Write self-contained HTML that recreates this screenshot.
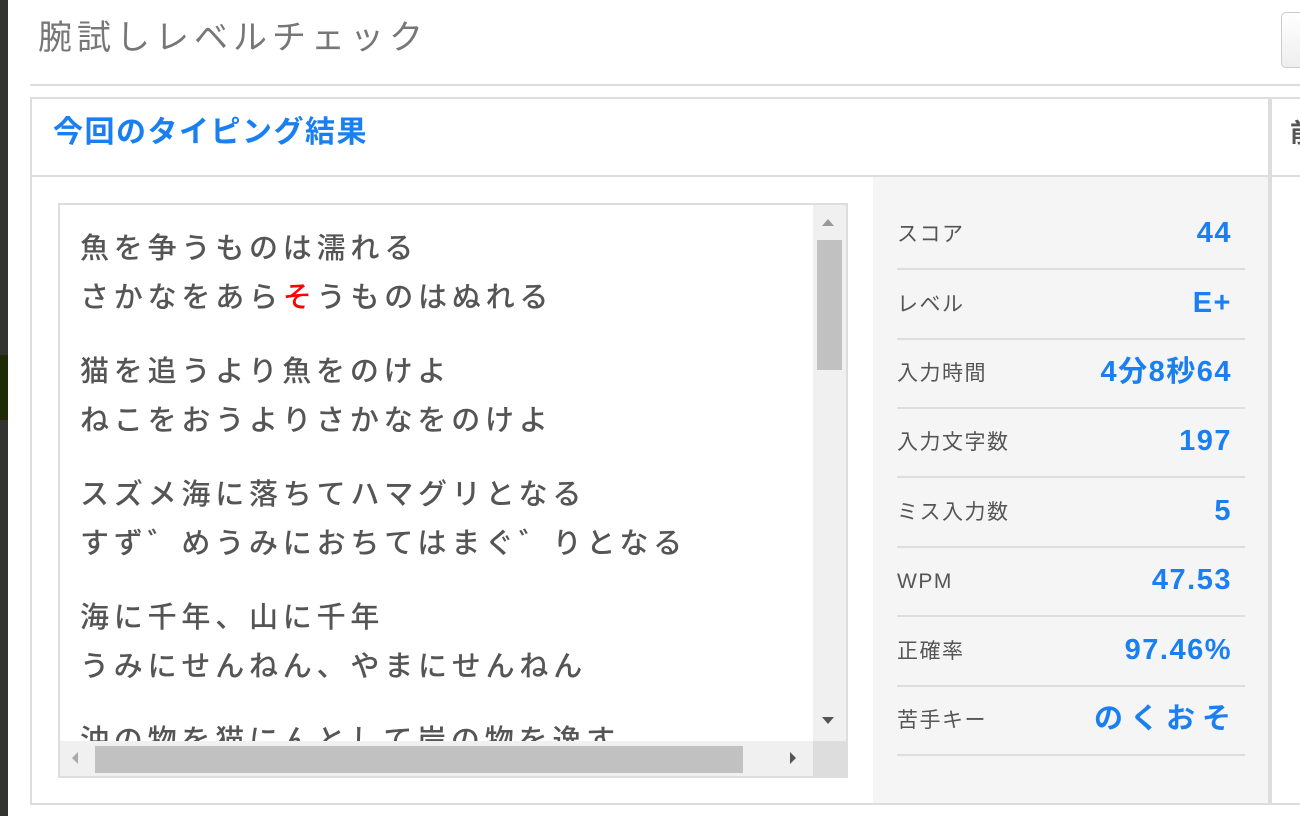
<!DOCTYPE html>
<html><head><meta charset="utf-8"><style>
*{margin:0;padding:0;box-sizing:border-box}
body{width:1300px;height:816px;overflow:hidden;background:#fff;font-family:"Liberation Sans","Noto Sans CJK JP",sans-serif;position:relative}
.abs{position:absolute}
.strip{left:0;top:0;width:8px;height:816px;background:#333331}
h1{position:absolute;left:38px;top:16px;font-size:34px;font-weight:normal;color:#777;letter-spacing:5px;line-height:44px;white-space:nowrap}
.hr{left:30px;top:84px;width:1270px;height:2px;background:#ddd}
.btn{left:1281px;top:12px;width:40px;height:56px;border:1px solid #ccc;border-radius:5px;background:linear-gradient(#fff,#eee)}
.panel{left:30px;top:97px;width:1240px;height:708px;border:2px solid #ddd}
.phead{left:30px;top:97px;width:1240px;height:80px;border-bottom:2px solid #ddd}
.title{left:53px;top:114px;font-size:30px;font-weight:bold;color:#1a7ff0;letter-spacing:1.5px;line-height:38px;white-space:nowrap}
.stats{left:873px;top:177px;width:395px;height:626px;background:#f5f5f5}
.ta{left:58px;top:203px;width:790px;height:575px;border:2px solid #ddd;background:#fff;overflow:hidden}
.txt{position:absolute;left:20px;top:20px;font-size:29px;color:#555;letter-spacing:4.8px;line-height:49px;white-space:nowrap;font-weight:500}
.txt p{margin-bottom:25px}
.vs{right:0;top:0;width:33px;height:538px;background:#f0f0f0}
.hs{left:0;bottom:0;width:786px;height:35px;background:#f0f0f0}
.row{left:897px;width:348px;height:70px;border-bottom:2px solid #ddd}
.lab{position:absolute;left:0;top:22px;font-size:21px;color:#555;line-height:26px;white-space:nowrap;letter-spacing:1.5px}
.val{position:absolute;right:13px;top:16px;font-size:29px;font-weight:bold;color:#1a7ff0;line-height:34px;white-space:nowrap;letter-spacing:1.5px}
.rp{left:1270px;top:97px;width:30px;height:708px;border-top:2px solid #ddd;border-bottom:2px solid #ddd;border-left:2px solid #ddd}
</style></head><body>
<div class="abs strip"></div>
<div class="abs" style="left:0;top:355px;width:8px;height:65px;background:#1f2a06"></div>
<h1>腕試しレベルチェック</h1>
<div class="abs btn"></div>
<div class="abs hr"></div>
<div class="abs panel"></div>
<div class="abs phead"></div>
<div class="abs title">今回のタイピング結果</div>
<div class="abs stats"></div>
<div class="abs rp"></div>
<div class="abs" style="left:1270px;top:175px;width:30px;height:2px;background:#ddd"></div>
<div class="abs" style="left:1290px;top:118px;font-size:26px;font-weight:bold;color:#555;line-height:30px">前</div>
<div class="abs ta">
<div class="txt">
<p>魚を争うものは濡れる<br>さかなをあら<span style="color:#f00">そ</span>うものはぬれる</p>
<p>猫を追うより魚をのけよ<br>ねこをおうよりさかなをのけよ</p>
<p>スズメ海に落ちてハマグリとなる<br>すず゛めうみにおちてはまぐ゛りとなる</p>
<p>海に千年、山に千年<br>うみにせんねん、やまにせんねん</p>
<p>沖の物を猫にんとして岸の物を逸す</p>
</div>
<div class="abs vs"><div class="abs" style="left:9px;top:14px;width:0;height:0;border-left:6px solid transparent;border-right:6px solid transparent;border-bottom:7px solid #999"></div><div class="abs" style="left:4px;top:35px;width:25px;height:130px;background:#c1c1c1"></div><div class="abs" style="left:9px;top:512px;width:0;height:0;border-left:6px solid transparent;border-right:6px solid transparent;border-top:7px solid #555"></div></div>
<div class="abs hs"><div class="abs" style="left:12px;top:11px;width:0;height:0;border-top:6px solid transparent;border-bottom:6px solid transparent;border-right:6px solid #aaa"></div><div class="abs" style="left:35px;top:5px;width:648px;height:27px;background:#c1c1c1"></div><div class="abs" style="left:730px;top:11px;width:0;height:0;border-top:6px solid transparent;border-bottom:6px solid transparent;border-left:6px solid #555"></div></div>
<div class="abs" style="right:0;bottom:0;width:33px;height:35px;background:#ddd"></div>
</div>
<div class="abs row" style="top:200px"><span class="lab">スコア</span><span class="val">44</span></div>
<div class="abs row" style="top:270px"><span class="lab">レベル</span><span class="val">E+</span></div>
<div class="abs row" style="top:339px"><span class="lab">入力時間</span><span class="val">4分8秒64</span></div>
<div class="abs row" style="top:408px"><span class="lab">入力文字数</span><span class="val">197</span></div>
<div class="abs row" style="top:478px"><span class="lab">ミス入力数</span><span class="val">5</span></div>
<div class="abs row" style="top:547px"><span class="lab">WPM</span><span class="val">47.53</span></div>
<div class="abs row" style="top:617px"><span class="lab">正確率</span><span class="val">97.46%</span></div>
<div class="abs row" style="top:686px"><span class="lab">苦手キー</span><span class="val" style="letter-spacing:7px;right:7px">のくおそ</span></div>
</body></html>
